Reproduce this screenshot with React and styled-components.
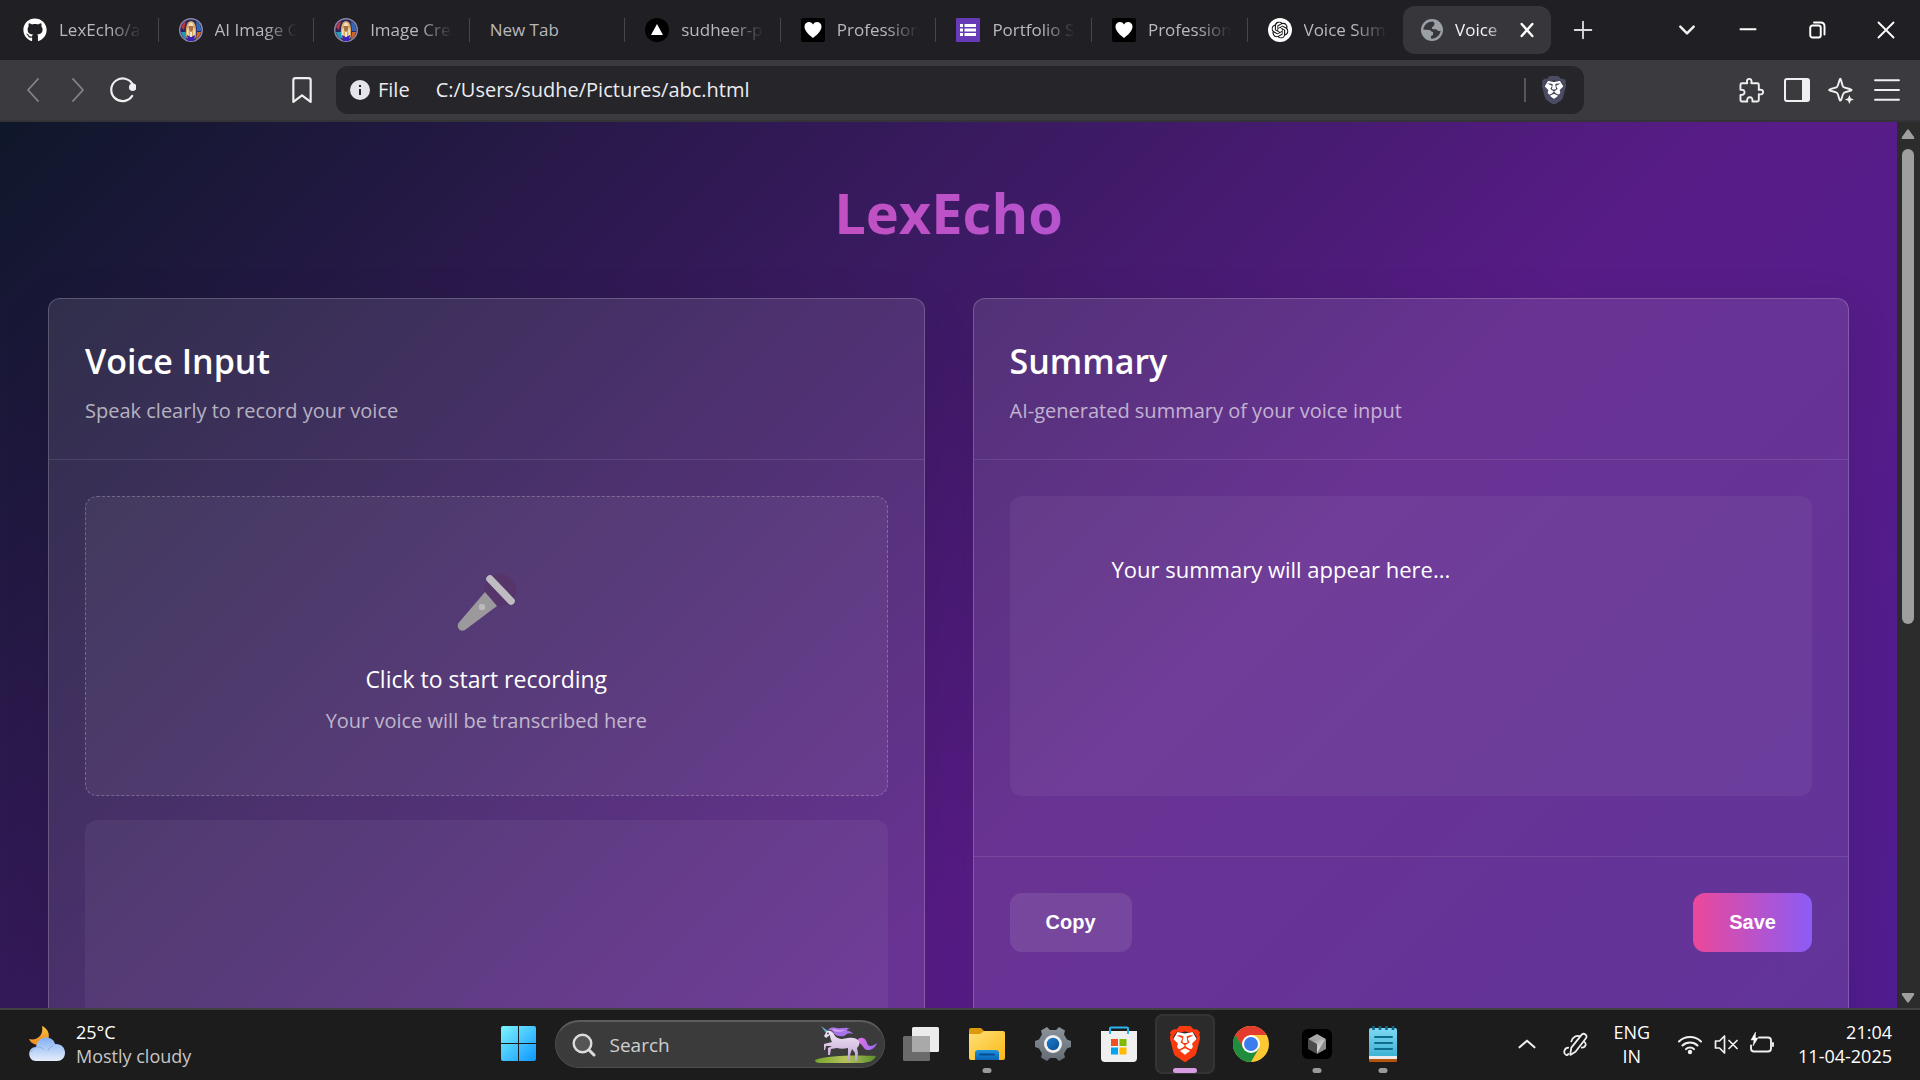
import React from "react";
import styled, { createGlobalStyle } from "styled-components";
import { SiBrave, SiOpenai } from "react-icons/si";
import { FaGithub } from "react-icons/fa";

const GlobalStyle = createGlobalStyle`
  *, *::before, *::after { box-sizing: border-box; }
  body {
    margin: 0;
    overflow: hidden;
    background: #1c1c1c;
    color: #fff;
    font-family: "Open Sans", "Noto Sans", sans-serif;
  }
  button, input { font: inherit; color: inherit; }
  button { border: 0; padding: 0; background: none; cursor: pointer; }
  h1, h2, p { margin: 0; }
  svg { display: block; flex: none; }
`;

const Desktop = styled.div`
  display: flex;
  flex-direction: column;
  height: 100vh;
`;

/* ---------- browser tabs ---------- */

const TabStrip = styled.header`
  display: flex;
  align-items: center;
  height: 60px;
  padding-left: 3px;
  background: #202024;
`;

const TabList = styled.div`
  display: flex;
  flex: 0 1 1548px;
  min-width: 0;
`;

const TabButton = styled.button`
  display: flex;
  align-items: center;
  gap: 12px;
  flex: ${(p) => (p.$active ? "0 0 148px" : "1 1 0")};
  min-width: 0;
  height: 48px;
  padding: 0 ${(p) => (p.$active ? "16px 0 18px" : "16px 0 20px")};
  border-radius: 12px;
  background: ${(p) => (p.$active ? "#36363b" : "transparent")};
  color: ${(p) => (p.$active ? "#f4f4f6" : "#b9b9bd")};
  font-size: 17px;
  line-height: 24px;
  text-align: left;
`;

const TabLabel = styled.span`
  flex: 1;
  overflow: hidden;
  white-space: nowrap;
  mask-image: ${(p) => (p.$whole ? "none" : "linear-gradient(to right, #000 60%, transparent)")};
`;

const TabSlot = styled.div`
  display: flex;
  align-items: center;
  flex: 1 1 0;
  min-width: 0;
`;

const TabDivider = styled.span`
  width: 1px;
  height: 24px;
  background: #46464b;
`;

const StripButton = styled.button`
  display: grid;
  place-items: center;
  width: ${(p) => p.$w}px;
  height: 48px;
`;

const WindowControls = styled.div`
  display: flex;
  margin-left: auto;
`;

/* ---------- toolbar ---------- */

const Toolbar = styled.nav`
  display: flex;
  align-items: center;
  height: 62px;
  padding: 0 11px 0 10px;
  background: #3b3b3f;
  border-bottom: 2px solid #333338;
`;

const ToolButton = styled.button`
  display: grid;
  place-items: center;
  width: 45px;
  height: 45px;
`;

const Spacer = styled.span`
  flex: ${(p) => p.$grow};
`;

const AddressBar = styled.div`
  display: flex;
  align-items: center;
  flex: 0 1 1248px;
  height: 48px;
  margin-left: 12px;
  padding: 0 18px 0 14px;
  border-radius: 12px;
  background: #25252a;
  color: #ececf0;
  font-size: 20px;
  line-height: 28px;
`;

const Scheme = styled.label`
  margin: 0 26px 0 8px;
`;

const AddressInput = styled.input`
  flex: 1;
  min-width: 0;
  padding: 0;
  border: 0;
  outline: 0;
  background: none;
`;

const AddressDivider = styled.span`
  width: 2px;
  height: 24px;
  margin-right: 16px;
  background: #56565c;
`;

/* ---------- page ---------- */

const Viewport = styled.div`
  display: flex;
  flex: 1;
  min-height: 0;
`;

const Page = styled.main`
  flex: 1;
  min-width: 0;
  overflow: hidden;
  padding: 0 48px;
  background: linear-gradient(135deg, #0f172a 0%, #581c87 50%, #4c1d95 100%) no-repeat;
  background-size: 100% 177%;
`;

const Brand = styled.h1`
  padding: 46px 0 42px;
  background: linear-gradient(90deg, #ec4899, #8b5cf6);
  background-clip: text;
  color: transparent;
  font-size: 56px;
  font-weight: 700;
  line-height: 88px;
  text-align: center;
`;

const Columns = styled.div`
  display: grid;
  grid-template-columns: 1fr 1fr;
  gap: 48px;
`;

const Card = styled.section`
  border: 1px solid rgba(255, 255, 255, 0.2);
  border-radius: 12px;
  background: rgba(255, 255, 255, 0.1);
  box-shadow: 0 12px 48px rgba(0, 0, 0, 0.1);
`;

const CardHeader = styled.header`
  padding: 36px 36px 34px;
  border-bottom: 1px solid rgba(255, 255, 255, 0.1);
`;

const CardTitle = styled.h2`
  margin-bottom: 10px;
  font-size: 34px;
  font-weight: 600;
  line-height: 52px;
`;

const Muted = styled.p`
  color: rgba(255, 255, 255, 0.64);
  font-size: 20px;
  line-height: 28px;
`;

const CardBody = styled.div`
  padding: 36px;
`;

const Recorder = styled.button`
  display: flex;
  flex-direction: column;
  align-items: center;
  width: 100%;
  min-height: 300px;
  margin-bottom: 24px;
  padding-top: 76px;
  border: 1px dashed rgba(255, 255, 255, 0.24);
  border-radius: 12px;
  background: rgba(255, 255, 255, 0.05);
`;

const RecorderLabel = styled.span`
  margin: 30px 0 12px;
  font-size: 23px;
  line-height: 32px;
`;

const TextPanel = styled.div`
  min-height: 300px;
  margin-bottom: 24px;
  padding: 57px 102px;
  border-radius: 12px;
  background: rgba(255, 255, 255, 0.05);
  font-size: 22px;
  line-height: 32px;
`;

const CardFooter = styled.footer`
  display: flex;
  justify-content: space-between;
  padding: 36px;
  padding-bottom: 90px;
  border-top: 1px solid rgba(255, 255, 255, 0.1);
`;

const ActionButton = styled.button`
  height: 59px;
  padding: 0 36px;
  border-radius: 12px;
  background: ${(p) => (p.$primary ? "linear-gradient(90deg, #ec4899, #8b5cf6)" : "rgba(255, 255, 255, 0.1)")};
  font-family: "Liberation Sans", sans-serif;
  font-size: 20px;
  font-weight: 700;
`;

const ScrollTrack = styled.div`
  display: flex;
  flex-direction: column;
  align-items: center;
  justify-content: space-between;
  width: 23px;
  padding: 6px 1px 4px 0;
  background: #2c2c2c;
`;

const ScrollLane = styled.div`
  flex: 1;
  width: 12px;
  margin: 9px 0;
`;

const ScrollThumb = styled.div`
  width: 12px;
  height: 57%;
  border-radius: 6px;
  background: #9f9f9f;
`;

/* ---------- taskbar ---------- */

const Taskbar = styled.footer`
  display: grid;
  grid-template-columns: 1fr auto 1fr;
  align-items: center;
  height: 72px;
  padding: 0 28px 2px 9px;
  border-top: 2px solid #424243;
  background: #1c1c1c;
  font-size: 18px;
  line-height: 24px;
`;

const Weather = styled.button`
  display: flex;
  align-items: center;
  gap: 11px;
  padding-left: 20px;
  text-align: left;
`;

const Stack = styled.span`
  display: flex;
  flex-direction: column;
  text-align: ${(p) => p.$align || "left"};
`;

const LanguageButton = styled.button`
  padding: 0 4px 0 8px;
`;

const Dim = styled.span`
  color: #c6c6c6;
`;

const Dock = styled.div`
  display: flex;
  align-items: center;
  gap: 6px;
`;

const DockButton = styled.button`
  display: grid;
  place-items: center;
  position: relative;
  width: 60px;
  height: 60px;
  border-radius: 8px;
  background: ${(p) => (p.$active ? "#2b2b2b" : "transparent")};
  box-shadow: ${(p) => (p.$active ? "inset 0 0 0 2px #343434" : "none")};
  &::after {
    content: "";
    display: ${(p) => (p.$running || p.$active ? "block" : "none")};
    position: absolute;
    bottom: 1px;
    left: 50%;
    width: ${(p) => (p.$active ? 24 : 9)}px;
    height: 5px;
    border-radius: 3px;
    background: ${(p) => (p.$active ? "#d89ce2" : "#9a9a9a")};
    transform: translateX(-50%);
  }
`;

const SearchBox = styled.label`
  display: flex;
  align-items: center;
  width: 330px;
  height: 48px;
  padding: 0 6px 0 16px;
  border: 1px solid #4c4c4c;
  border-top: 2px solid #5c5c5c;
  border-radius: 24px;
  background: #3b3b3b;
  font-size: 20px;
`;

const SearchInput = styled.input`
  flex: 1;
  min-width: 0;
  margin-left: 14px;
  padding: 0;
  border: 0;
  outline: 0;
  background: none;
  font-size: 19px;
  &::placeholder { color: #cfcfcf; opacity: 1; }
`;

const Tray = styled.div`
  display: flex;
  align-items: center;
  justify-content: flex-end;
  gap: 12px;
`;

const TrayButton = styled.button`
  display: grid;
  place-items: center;
  width: 36px;
  height: 48px;
`;

const TrayGroup = styled.button`
  display: flex;
  align-items: center;
  gap: 12px;
  height: 48px;
  margin: 0 12px;
`;

/* ---------- drawings ---------- */

const Line = ({ size = 24, w = 2, color = "#f0f0f2", children }) => (
  <svg width={size} height={size} viewBox="0 0 24 24" fill="none" stroke={color} strokeWidth={w} strokeLinecap="round" strokeLinejoin="round">
    {children}
  </svg>
);

const Leonardo = () => (
  <svg width="24" height="24" viewBox="0 0 24 24">
    <circle cx="12" cy="12" r="12" fill="#8d88a8" />
    <circle cx="12" cy="12" r="10.6" fill="#27265e" />
    <path d="M2 9a10.5 10.5 0 0 1 5-6l-2 9z" fill="#c0343b" />
    <path d="M2 14l5 0 0 7a11 11 0 0 1-5-7z" fill="#219bb5" />
    <path d="M17 3a10.5 10.5 0 0 1 5 10l-4 0z" fill="#3366b5" />
    <path d="M18 14h4a11 11 0 0 1-5 7z" fill="#d06427" />
    <path d="M7.500 20C6 12 7 3 12 3s6 9 4.500 17l-3 2h-3z" fill="#d9a95c" />
    <path d="M9.500 10c-1 4-1 7 0 9M14.500 10c1 4 1 7 0 9" stroke="#f7ecd6" strokeWidth="1.300" fill="none" />
    <path d="M9.800 8q2.200-3 4.400 0v3.500q-2.200 4-4.400 0z" fill="#a8704a" />
    <path d="M10 5.500q2-2 4 0l.5 2.500h-5z" fill="#f0dcc0" />
    <path d="M8 17l4 2 4-2-1 6H9z" fill="#3b22b8" />
    <path d="M11.300 14h1.400v5h-1.400z" fill="#fff" />
  </svg>
);

const Vercel = () => (
  <svg width="24" height="24" viewBox="0 0 24 24">
    <circle cx="12" cy="12" r="12" fill="#000" />
    <path d="M12 6l6 11H6z" fill="#fff" />
  </svg>
);

const Heart = () => (
  <svg width="24" height="24" viewBox="0 0 24 24">
    <rect width="24" height="24" rx="2" fill="#000" />
    <path d="M12 20C8 17 3.500 13 3.500 8.500C3.500 3.500 10 2.500 12 6.500C14 2.500 20.500 3.500 20.500 8.500C20.500 13 16 17 12 20z" fill="#fff" />
  </svg>
);

const Forms = () => (
  <svg width="24" height="24" viewBox="0 0 24 24">
    <rect width="24" height="24" rx="1" fill="#673ab7" />
    <path d="M4 6h3v3H4zM8.500 6H20v3H8.500zM4 10.500h3v3H4zM8.500 10.500H20v3H8.500zM4 15h3v3H4zM8.500 15H20v3H8.500z" fill="#fff" />
  </svg>
);

const OpenAi = () => (
  <svg width="24" height="24" viewBox="0 0 24 24">
    <circle cx="12" cy="12" r="12" fill="#fff" />
    <SiOpenai x="3.500" y="3.500" size={17} color="#111" />
  </svg>
);

const Globe = () => (
  <svg width="22" height="22" viewBox="0 0 22 22">
    <circle cx="11" cy="11" r="11" fill="#9aa0a6" />
    <path d="M12 2.500C8 2 3 5 2.300 10.500L8 11c2 0 2 2 4 2v3l-2 1v2.600c5 .4 9-3 9.700-8.100-1 1-2.700.5-3.700-.5-1-1.500-4 0-5-1.500-.5-2 1.500-1.500 2-3C13.500 5 14 4 12 2.500z" fill="#36363b" />
    <path d="M9 17.500c-2.500-1-2-3.500-5-4.500 .6 3 2.500 5.500 5 6.300z" fill="#9aa0a6" />
  </svg>
);

const BraveMark = ({ width, shield, face }) => (
  <svg width={width} height={width * 1.2} viewBox="2 0 20 24">
    <path d="M7 4l5 1 5-1 3 5-3 8-5 5-5-5-3-8z" fill={face} />
    <SiBrave size={24} color={shield} />
  </svg>
);

const Microphone = () => (
  <svg width="60" height="60" viewBox="0 0 60 60">
    <circle cx="44" cy="17" r="16" fill="#56356a" />
    <path d="M29 19L41 33L9 57C4 60 0 54 2.500 50z" fill="#9b999c" />
    <circle cx="26" cy="34" r="3.200" fill="#bcbabd" />
    <path d="M34 6L55 28" stroke="#bfbdc1" strokeWidth="7.500" strokeLinecap="round" />
  </svg>
);

const Puzzle = () => (
  <Line size={27} w={1.700}>
    <path d="M3.500 5.500h4.700c-.8-2.800.4-3.800 1.800-3.800s2.600 1 1.800 3.800h5.400c.8 0 1.300.5 1.300 1.300v4.700c2.800-.6 3.800.4 3.800 1.900s-1 2.500-3.800 1.900v5.200c0 .8-.5 1.300-1.300 1.300h-4.400c.4-2.800-.7-3.800-2.300-3.800s-2.700 1-2.300 3.800H3.500c-.8 0-1.300-.5-1.300-1.300v-4.600c2.800.2 3.600-.9 3.600-2.300s-.8-2.500-3.600-2.300V6.800c0-.8.500-1.300 1.300-1.300z" />
  </Line>
);

const Sidebar = () => (
  <svg width="26" height="24" viewBox="0 0 26 24">
    <rect x="1" y="1" width="24" height="22" rx="2" fill="none" stroke="#f0f0f2" strokeWidth="2" />
    <rect x="18" y="1" width="7" height="22" fill="#f0f0f2" />
  </svg>
);

const Sparkle = () => (
  <Line size={27} w={1.700}>
    <path d="M11 1.500c.8 0 1.200 6 2.600 7.300C15 10 21 10.500 21 11.500s-5 1.200-6.800 2.600c-1.700 1.500-2 6.900-3.200 6.900s-1.400-5.400-3-6.900c-1.500-1.400-7-1.500-7-2.600s5.600-1.500 7-2.700c1.400-1.300 2-7.300 3-7.300z" />
    <path d="M19 16l1.200 2.800L23 20l-2.800 1.200L19 24l-1.200-2.800L15 20l2.800-1.200z" fill="#f0f0f2" stroke="none" />
  </Line>
);

const Arrow = ({ down }) => (
  <svg width="14" height="12" viewBox="0 0 14 12">
    <path d={down ? "M2 1h10q2 0 1 2L8 10q-1 1.500-2 0L1 3Q0 1 2 1z" : "M2 11h10q2 0 1-2L8 2q-1-1.500-2 0L1 9q-1 2 1 2z"} fill="#9f9f9f" />
  </svg>
);

const WeatherIcon = () => (
  <svg width="36" height="36" viewBox="0 0 36 36">
    <defs>
      <linearGradient id="moon" x1="0" y1="0" x2="0" y2="1"><stop offset="0" stopColor="#f5c344" /><stop offset="1" stopColor="#f08a1c" /></linearGradient>
      <linearGradient id="cloud" x1="0" y1="0" x2="0" y2="1"><stop offset="0" stopColor="#82b0f4" /><stop offset="1" stopColor="#e4edfb" /></linearGradient>
    </defs>
    <path d="M13 0c9 4 9 15 1 18C8 20 2 18 0 13c8 2 15-4 13-13z" fill="url(#moon)" />
    <path d="M7 35C-2 35-2 21 7 21C9 9 24 9 26 18C39 17 39 35 28 35z" fill="url(#cloud)" />
    <path d="M2 26c3-7 10-6 13-2M24 20c-3 1-5 3-5 5" fill="none" stroke="#7c9fe3" strokeWidth="1" opacity=".7" />
  </svg>
);

const WindowsLogo = () => (
  <svg width="36" height="36" viewBox="0 0 36 36">
    <defs><linearGradient id="win" gradientUnits="userSpaceOnUse" x1="0" y1="0" x2="36" y2="36"><stop stopColor="#7df3ff" /><stop offset="1" stopColor="#0a95ff" /></linearGradient></defs>
    <path d="M2 0h15v17H0V2q0-2 2-2zM18 0h15q2 0 2 2v15H18zM0 18h17v17H2q-2 0-2-2zM18 18h17v15q0 2-2 2H18z" fill="url(#win)" />
  </svg>
);

const Magnifier = () => (
  <svg width="24" height="24" viewBox="0 0 24 24" fill="none" stroke="#dcdcdc" strokeLinecap="round">
    <circle cx="10.500" cy="10.500" r="8.800" fill="#555" strokeWidth="2.400" />
    <path d="M17 17l5 5" strokeWidth="3" />
  </svg>
);

const Unicorn = () => (
  <svg width="64" height="40" viewBox="0 0 64 40">
    <defs>
      <linearGradient id="grass" x1="0" x2="1"><stop stopColor="#76a52b" /><stop offset=".5" stopColor="#b5c25c" /><stop offset="1" stopColor="#5b8f2a" /></linearGradient>
      <linearGradient id="tail" x1="0" x2="1"><stop stopColor="#e072e8" /><stop offset="1" stopColor="#8f6cf0" /></linearGradient>
      <linearGradient id="coat" x1="0" y1="0" x2="0" y2="1"><stop stopColor="#f3e9f6" /><stop offset="1" stopColor="#bfa0d2" /></linearGradient>
    </defs>
    <path d="M1 35C14 30 44 30 62 31C60 36 54 38 46 38L6 38C3 38 1 37 1 35z" fill="url(#grass)" />
    <path d="M7 1l7 5-2 2z" fill="#69b3c9" />
    <path d="M44 14c5-3 8 0 9 4 1 4 5 4 10 0-2 7-10 9-13 5-2-3-3-5-6-5z" fill="url(#tail)" />
    <path d="M13 6c3-1 6 0 8 5 4 4 8 3 13 2 4-1 9 0 11 3 1 3 0 5-2 7l1 5-1 8h-2l0-8-3-4-2 6-1 6h-2l1-7 0-6c-4 1-8 1-11 0l-6 1-1 6h-2l0-7 4-2-6 0-1 4-1 0 0-6 8-2c-1-2-2-4-2-7l-4 3-2-2z" fill="url(#coat)" />
    <path d="M14 5c4-5 8-1 13-2 3 0 6-1 9 1-3 0-4 1-2 2 2 0 4 1 5 3-5-2-7 1-9 2-5 1-9 0-11-4-1-2-3-2-5-2z" fill="#a873e6" />
    <path d="M18 4c5 1 9 1 15 1-5 1-8 3-13 1z" fill="#d4a1f3" />
    <circle cx="14" cy="8.500" r="0.900" fill="#443052" />
  </svg>
);

const TaskView = () => (
  <svg width="36" height="36" viewBox="0 0 36 36">
    <rect x="9" y="1" width="27" height="25" rx="1.500" fill="#ececec" />
    <rect x="0" y="10" width="27" height="25" rx="1.500" fill="#6a6a6a" />
    <rect x="9" y="10" width="18" height="16" fill="#a9a9a9" />
  </svg>
);

const Explorer = () => (
  <svg width="36" height="36" viewBox="0 0 36 36">
    <defs>
      <linearGradient id="folder" x1="0" y1="0" x2="1" y2="1"><stop stopColor="#ffe07a" /><stop offset="1" stopColor="#f9b914" /></linearGradient>
      <linearGradient id="tray" x1="0" y1="0" x2="0" y2="1"><stop stopColor="#1e93e0" /><stop offset="1" stopColor="#0a63b5" /></linearGradient>
    </defs>
    <path d="M2 2h10l4 4v6H0V4q0-2 2-2z" fill="#dd9b0c" />
    <path d="M0 8h11l4-3h19q2 0 2 2v25q0 2-2 2H2q-2 0-2-2z" fill="url(#folder)" />
    <path d="M6 34V27q0-3 3-3h18q3 0 3 3v7z" fill="url(#tray)" />
    <path d="M11 28.500h14" stroke="#0a4b8f" strokeWidth="2" strokeLinecap="round" />
  </svg>
);

const Gear = () => (
  <svg width="36" height="36" viewBox="0 0 36 36">
    <defs>
      <linearGradient id="gear" x1="0" y1="0" x2="0" y2="1"><stop stopColor="#8b939b" /><stop offset="1" stopColor="#646c76" /></linearGradient>
      <linearGradient id="hub" x1="0" y1="0" x2="1" y2="1"><stop stopColor="#1d7fd0" /><stop offset="1" stopColor="#0b4e94" /></linearGradient>
    </defs>
    <path d="M12 1l3 3h6l3-3 6 3.500-1 4 3 5 4 1.500v6l-4 1.500-3 5 1 4-6 3.500-3-3h-6l-3 3-6-3.500 1-4-3-5L0 21v-6l4-1.500 3-5-1-4z" fill="url(#gear)" />
    <circle cx="18" cy="18" r="9" fill="#f1f1f1" />
    <circle cx="18" cy="18" r="6.200" fill="url(#hub)" />
  </svg>
);

const Store = () => (
  <svg width="36" height="36" viewBox="0 0 36 36">
    <path d="M0 5h36v27q0 4-4 4H4q-4 0-4-4z" fill="#f0f0f0" />
    <path d="M9 8V2.500q0-1 1-1h16q1 0 1 1V8" fill="none" stroke="#2ab4ee" strokeWidth="2" />
    <path d="M10 13h7v7h-7z" fill="#f25022" /><path d="M18.500 13h7v7h-7z" fill="#7fba00" />
    <path d="M10 21.500h7v7h-7z" fill="#00a4ef" /><path d="M18.500 21.500h7v7h-7z" fill="#ffb900" />
  </svg>
);

const Chrome = () => (
  <svg width="36" height="36" viewBox="0 0 36 36">
    <circle cx="18" cy="18" r="18" fill="#fcc934" />
    <path d="M2.400 9A18 18 0 0 0 18 36l7.800-13.500L10.200 22.500z" fill="#1e8e3e" />
    <path d="M2.400 9A18 18 0 0 1 33.600 9H18l-7.800 13.500z" fill="#e33b2e" />
    <path d="M2.400 9l7.800 13.500 4 4H6z" fill="#1e8e3e" />
    <circle cx="18" cy="18" r="9" fill="#fff" />
    <circle cx="18" cy="18" r="7" fill="#3b7ded" />
  </svg>
);

const Cube = () => (
  <svg width="30" height="30" viewBox="0 0 30 30">
    <defs><linearGradient id="cube" x1="0" y1="0" x2="1" y2="1"><stop stopColor="#8a8a8a" /><stop offset="1" stopColor="#fff" /></linearGradient></defs>
    <rect width="30" height="30" rx="6" fill="#000" />
    <path d="M15 5l9 5-9 5-9-5z" fill="#a8a8a8" />
    <path d="M6 10l9 5v10l-9-5z" fill="#4c4c4c" />
    <path d="M24 10v10l-9 5V15z" fill="#8c8c8c" />
    <path d="M7 10.500h16L15 24v-9z" fill="url(#cube)" />
  </svg>
);

const Notepad = () => (
  <svg width="28" height="36" viewBox="0 0 28 36">
    <defs><linearGradient id="note" x1="0" y1="0" x2="0" y2="1"><stop stopColor="#7fd9f2" /><stop offset="1" stopColor="#3fb3d6" /></linearGradient></defs>
    <path d="M0 31h28v4q0 1-1 1H1q-1 0-1-1z" fill="#b5540c" />
    <path d="M0 28h28v5H0z" fill="#ececec" />
    <path d="M0 4q0-2 2-2h24q2 0 2 2v26H0z" fill="url(#note)" />
    <path d="M4.500 0v4M11 0v4M17.500 0v4M24 0v4" stroke="#0f6683" strokeWidth="2.600" />
    <path d="M6 11h17M6 17h17M6 23h17" stroke="#0e6c8c" strokeWidth="2" strokeLinecap="round" />
  </svg>
);

const tabs = [
  { label: "LexEcho/ap", icon: <FaGithub size={24} color="#fff" /> },
  { label: "AI Image G", icon: <Leonardo /> },
  { label: "Image Crea", icon: <Leonardo /> },
  { label: "New Tab", whole: true },
  { label: "sudheer-p", icon: <Vercel /> },
  { label: "Profession", icon: <Heart /> },
  { label: "Portfolio S", icon: <Forms /> },
  { label: "Profession", icon: <Heart /> },
  { label: "Voice Sum", icon: <OpenAi /> },
];

export default function App() {
  return (
    <Desktop>
      <GlobalStyle />
      <TabStrip>
        <TabList role="tablist">
          {tabs.map((t, i) => (
            <TabSlot key={i}>
              <TabButton role="tab">
                {t.icon}
                <TabLabel $whole={t.whole}>{t.label}</TabLabel>
              </TabButton>
              {i < tabs.length - 1 && <TabDivider />}
            </TabSlot>
          ))}
          <TabButton role="tab" aria-selected="true" $active>
            <Globe />
            <TabLabel>Voice</TabLabel>
            <Line size={16} w={3.600} color="#fff"><path d="M4 3l16 18M20 3L4 21" /></Line>
          </TabButton>
        </TabList>
        <StripButton aria-label="New tab" $w={63}>
          <Line size={20} w={2.200} color="#dcdce0"><path d="M12 2v20M2 12h20" /></Line>
        </StripButton>
        <WindowControls>
          <StripButton aria-label="Search tabs" $w={52}>
            <Line size={20} w={3}><path d="M4 8l8 8 8-8" /></Line>
          </StripButton>
          <StripButton aria-label="Minimize" $w={69}>
            <Line size={20} w={2.400} color="#fff"><path d="M3 11h18" /></Line>
          </StripButton>
          <StripButton aria-label="Restore" $w={69}>
            <Line size={18} w={2.600} color="#fff"><rect x="3" y="6" width="14" height="16" rx="3" /><path d="M8 2h9q5 0 5 5v11" /></Line>
          </StripButton>
          <StripButton aria-label="Close" $w={69}>
            <Line size={20} w={2.200} color="#fff"><path d="M3 3l18 18M21 3L3 21" /></Line>
          </StripButton>
        </WindowControls>
      </TabStrip>

      <Toolbar>
        <ToolButton aria-label="Back"><Line w={1.800} color="#85858a"><path d="M17 1L7 12l10 11" /></Line></ToolButton>
        <ToolButton aria-label="Forward"><Line w={1.800} color="#85858a"><path d="M7 1l10 11L7 23" /></Line></ToolButton>
        <ToolButton aria-label="Reload">
          <Line size={26} w={2}><path d="M20.500 17.500A10.500 10.500 0 1 1 21 7" /><circle cx="21" cy="9.500" r="2.500" fill="#f0f0f2" /></Line>
        </ToolButton>
        <Spacer $grow="0 1 134px" />
        <ToolButton aria-label="Bookmark"><Line size={26} w={2}><path d="M4 3q0-2 2-2h12q2 0 2 2v20l-8-6-8 6z" /></Line></ToolButton>
        <AddressBar>
          <svg width="20" height="20" viewBox="0 0 20 20">
            <circle cx="10" cy="10" r="10" fill="#e4e4ea" />
            <path d="M9 9h2v6H9zM9 5h2v2H9z" fill="#25252a" />
          </svg>
          <Scheme htmlFor="address">File</Scheme>
          <AddressInput id="address" defaultValue="C:/Users/sudhe/Pictures/abc.html" />
          <AddressDivider />
          <BraveMark width={24} shield="#4b4b63" face="#fff" />
        </AddressBar>
        <Spacer $grow="1" />
        <ToolButton aria-label="Extensions"><Puzzle /></ToolButton>
        <ToolButton aria-label="Sidebar"><Sidebar /></ToolButton>
        <ToolButton aria-label="Assistant"><Sparkle /></ToolButton>
        <ToolButton aria-label="Menu"><Line size={26} w={1.900}><path d="M1 3h22M1 12h22M1 21h22" /></Line></ToolButton>
      </Toolbar>

      <Viewport>
        <Page>
          <Brand>LexEcho</Brand>
          <Columns>
            <Card>
              <CardHeader>
                <CardTitle>Voice Input</CardTitle>
                <Muted>Speak clearly to record your voice</Muted>
              </CardHeader>
              <CardBody>
                <Recorder>
                  <Microphone />
                  <RecorderLabel>Click to start recording</RecorderLabel>
                  <Muted as="span">Your voice will be transcribed here</Muted>
                </Recorder>
                <TextPanel />
              </CardBody>
            </Card>
            <Card>
              <CardHeader>
                <CardTitle>Summary</CardTitle>
                <Muted>AI-generated summary of your voice input</Muted>
              </CardHeader>
              <CardBody>
                <TextPanel>Your summary will appear here...</TextPanel>
              </CardBody>
              <CardFooter>
                <ActionButton>Copy</ActionButton>
                <ActionButton $primary>Save</ActionButton>
              </CardFooter>
            </Card>
          </Columns>
        </Page>
        <ScrollTrack>
          <Arrow />
          <ScrollLane><ScrollThumb /></ScrollLane>
          <Arrow down />
        </ScrollTrack>
      </Viewport>

      <Taskbar>
        <Weather>
          <WeatherIcon />
          <Stack><span>25°C</span><Dim>Mostly cloudy</Dim></Stack>
        </Weather>
        <Dock>
          <DockButton aria-label="Start"><WindowsLogo /></DockButton>
          <SearchBox>
            <Magnifier />
            <SearchInput placeholder="Search" aria-label="Search" />
            <Unicorn />
          </SearchBox>
          <DockButton aria-label="Task view"><TaskView /></DockButton>
          <DockButton aria-label="File Explorer" $running><Explorer /></DockButton>
          <DockButton aria-label="Settings"><Gear /></DockButton>
          <DockButton aria-label="Store"><Store /></DockButton>
          <DockButton aria-label="Brave" $active><BraveMark width={30} shield="#fb3a10" face="#fff" /></DockButton>
          <DockButton aria-label="Chrome"><Chrome /></DockButton>
          <DockButton aria-label="Cursor" $running><Cube /></DockButton>
          <DockButton aria-label="Notepad" $running><Notepad /></DockButton>
        </Dock>
        <Tray>
          <TrayButton aria-label="Hidden icons"><Line size={20} w={2.400}><path d="M3 16l9-8 9 8" /></Line></TrayButton>
          <TrayButton aria-label="Pen">
            <Line size={25} w={1.700}>
              <path d="M7 21l1-6L18 2.500c2-2 6 .5 4 3.500L12 19l-5 3M8 9c1-4 5-6 8-5M5 15c-4 0-5 6-2 7 1 .3 2 0 2-1M20 9c3 2 2 6-2 6" />
            </Line>
          </TrayButton>
          <LanguageButton aria-label="Input language">
            <Stack $align="center"><span>ENG</span><span>IN</span></Stack>
          </LanguageButton>
          <TrayGroup aria-label="Network, sound and battery">
            <Line w={2}>
              <path d="M1 9.500c6-6 16-6 22 0M4.500 13.500c4-4 11-4 15 0M8 17.200c2-2.200 6-2.200 8 0" /><circle cx="12" cy="20" r="1.200" fill="#fff" />
            </Line>
            <Line w={1.700}><path d="M1.500 9h4l5-5v17l-5-5h-4zM15 8.500l8 8M23 8.500l-8 8" /></Line>
            <Line w={1.900}>
              <path d="M9 5.500h9q3 0 3 3v8q0 3-3 3H4q-3 0-3-3v-3M23 11v3" /><path d="M5.500 0L1 8h3l-1 6 5-8H5.500z" fill="#fff" strokeWidth="0.500" />
            </Line>
          </TrayGroup>
          <Stack $align="right"><span>21:04</span><span>11-04-2025</span></Stack>
        </Tray>
      </Taskbar>
    </Desktop>
  );
}
